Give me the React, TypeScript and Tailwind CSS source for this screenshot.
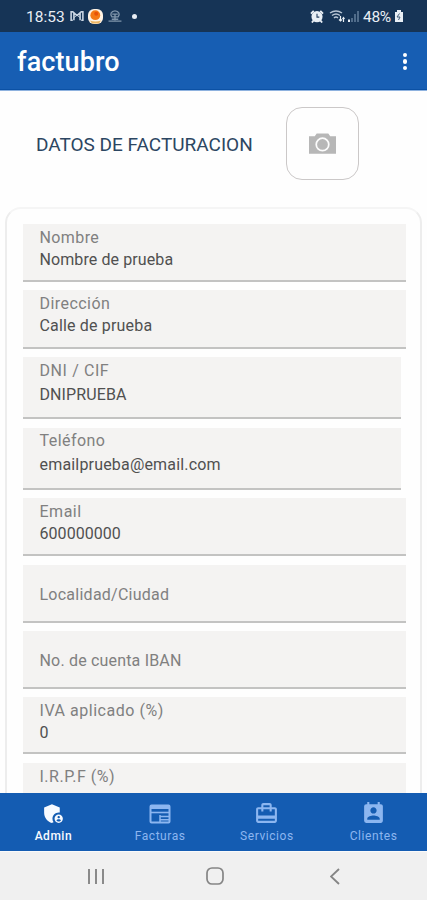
import React from "react";
import { MdAdminPanelSettings, MdCardTravel, MdPermContactCalendar } from "react-icons/md";

type FieldProps = {
  label: string;
  value?: string;
  labelClass: string;
  valueClass?: string;
  box: string;
};

const fields: FieldProps[] = [
  { label: "Nombre", value: "Nombre de prueba", box: "w-[383px] h-[58px] mb-[8px] pt-[4px]", labelClass: "tracking-[0.4px]", valueClass: "mt-[2px] tracking-[0.1px]" },
  { label: "Dirección", value: "Calle de prueba", box: "w-[383px] h-[59px] mb-[8px] pt-[4px]", labelClass: "tracking-[0.45px]", valueClass: "mt-[2px] tracking-[0.17px]" },
  { label: "DNI / CIF", value: "DNIPRUEBA", box: "w-[378px] h-[62px] mb-[9px] pt-[4px]", labelClass: "tracking-[0.6px]", valueClass: "mt-[4px] tracking-[0.1px]" },
  { label: "Teléfono", value: "emailprueba@email.com", box: "w-[378px] h-[62px] mb-[8px] pt-[3px]", labelClass: "tracking-[0.45px]", valueClass: "mt-[4px] tracking-[0.18px]" },
  { label: "Email", value: "600000000", box: "w-[383px] h-[58px] mb-[9px] pt-[4px]", labelClass: "tracking-[0.5px]", valueClass: "mt-[2px] tracking-[0.05px]" },
  { label: "Localidad/Ciudad", box: "w-[383px] h-[58px] mb-[8px] pt-[20px]", labelClass: "tracking-[0.25px]" },
  { label: "No. de cuenta IBAN", box: "w-[383px] h-[58px] mb-[8px] pt-[20px]", labelClass: "tracking-[0.18px]" },
  { label: "IVA aplicado (%)", value: "0", box: "w-[383px] h-[57px] mb-[9px] pt-[4px]", labelClass: "tracking-[0.53px]", valueClass: "mt-[2px]" },
  { label: "I.R.P.F (%)", box: "w-[383px] h-[58px] pt-[4px]", labelClass: "tracking-[0.5px]" },
];

function Field({ label, value, labelClass, valueClass = "", box }: FieldProps) {
  return (
    <div className={`shrink-0 border-b-2 border-[#c3c3c2] bg-[#f4f3f2] pl-[17px] text-[16px] leading-[20px] ${box}`}>
      <div className={`w-max text-[#808080] ${labelClass}`}>{label}</div>
      {value && <div className={`w-max text-[#505050] ${valueClass}`}>{value}</div>}
    </div>
  );
}

function StatusBar() {
  return (
    <div className="flex h-8 shrink-0 items-center justify-between bg-[#163456] pl-[26px] pr-[23px] text-[#e9eef4]">
      <div className="flex items-center">
        <span className="w-[38px] pt-[2px] text-[15.5px] leading-5">18:53</span>
        <svg className="ml-[6px]" width="14" height="12" viewBox="0 0 15 12" fill="none" stroke="#c9d5e2" strokeWidth="1.7">
          <path d="M3 10.500H1.200v-9H3l4.500 4 4.500-4h1.800v9H12M4.200 3v7.500M10.800 3v7.500" />
          <path d="m4 8 3.500-3L11 8" strokeWidth="1" />
        </svg>
        <svg className="ml-[4px]" width="15" height="15" viewBox="0 0 15 15">
          <rect width="15" height="15" rx="6" fill="#fff3e4" />
          <circle cx="7.300" cy="6.200" r="4.900" fill="#f47a16" />
          <circle cx="8.200" cy="4.800" r="2" fill="#e85308" />
          <path d="M2 11.500q5.500 2.200 11 0l-2 3H4Z" fill="#edb563" />
        </svg>
        <svg className="ml-[5px]" width="14" height="12" viewBox="0 0 15 13" fill="none" stroke="#8095ab" strokeWidth="1.500">
          <path d="M4.200 7.500C1.700 5 3.300 1 7.500 1s5.800 4 3.300 6.500Z" />
          <path d="M4.500 4.500h6M7.500 4.500V11M.5 12h14M4 10h7" />
        </svg>
        <span className="ml-[10px] size-[5px] rounded-full bg-[#e7edf4]" />
      </div>
      <div className="flex items-center">
        <svg width="14" height="13" viewBox="0 0 15 14">
          <circle cx="7.500" cy="7.200" r="6" fill="#e9eff5" />
          <path d="m1 4 3-3m7 0 3 3M4 11l-2 2.500M11 11l2 2.500" stroke="#e9eff5" strokeWidth="2" />
          <path d="M7.500 4v3.700h2.500" fill="none" stroke="#243f60" strokeWidth="1.200" />
        </svg>
        <svg className="ml-[5px]" width="17" height="14" viewBox="0 0 17 14" fill="none" stroke="#b8c6d5" strokeWidth="1.500">
          <path d="M1 4q6-4 12 0M3 6.500q4-3 8 0M5 9q2-2 4 0" />
          <path d="M11.500 7v5m-1.500-1.500 1.500 1.500 1.500-1.500M14.500 13V8.500M13.500 10l1-1.500 1 1.500" stroke="#e9eff5" strokeWidth="1.200" />
        </svg>
        <svg className="mx-[1px]" width="13" height="14" viewBox="0 0 13 14">
          <path d="M1 10.500h2V13H1Z" fill="#e9eff5" />
          <path d="M4 9h2v4H4ZM7 5h2v8H7ZM10 2h2v11h-2Z" fill="#506c8a" />
        </svg>
        <span className="ml-[2px] w-[30px] pt-[2px] text-[15.500px] leading-5 tracking-[-0.3px]">48%</span>
        <svg className="ml-[1px]" width="10" height="14" viewBox="0 0 10 14">
          <path d="M3 1h4v2h2v10H1V3h2Z" fill="#e9eff5" />
          <path d="M5.500 4.500 3 8h3l-1.500 3" fill="none" stroke="#435c76" />
        </svg>
      </div>
    </div>
  );
}

function FacturasIcon() {
  return (
    <svg width="22" height="20" viewBox="0 0 22 20" fill="none" stroke="currentColor" strokeWidth="2">
      <rect x="1.500" y="1.500" width="19" height="17" rx="1" />
      <path d="M1 3h20" strokeWidth="4" />
      <path d="M1 8.500h20" strokeWidth="1.600" />
      <path d="M11 12.600h10M11 15.700h10M11 11v8" strokeWidth="1.500" />
    </svg>
  );
}

const tabs = [
  { name: "Admin", icon: <MdAdminPanelSettings size={25} />, color: "text-[#f7faff]", tracking: "tracking-[0.5px] font-medium" },
  { name: "Facturas", icon: <FacturasIcon />, color: "text-[#8cb6f0]", tracking: "tracking-[0.55px]" },
  { name: "Servicios", icon: <MdCardTravel size={25} />, color: "text-[#8cb6f0]", tracking: "tracking-[0.55px]" },
  { name: "Clientes", icon: <MdPermContactCalendar size={25} />, color: "text-[#8cb6f0]", tracking: "tracking-[0.6px]" },
];

export default function App() {
  return (
    <div className="flex h-[900px] w-[427px] flex-col overflow-hidden bg-[#fefefe] font-['Roboto',sans-serif]">
      <StatusBar />
      <header className="flex h-[58px] shrink-0 items-center justify-between border-b border-[#0b51a5] bg-[#175eb3] pl-[17px] pr-[20px] text-white">
        <h1 className="pt-[3px] text-[27px] font-medium leading-8 tracking-[0.1px]">factubro</h1>
        <div className="flex flex-col gap-[2px] pt-[2px]">
          <span className="size-[4.500px] rounded-full bg-white" />
          <span className="size-[4.500px] rounded-full bg-white" />
          <span className="size-[4.500px] rounded-full bg-white" />
        </div>
      </header>
      <main className="flex min-h-0 flex-1 flex-col overflow-hidden border-t border-[#8eb2df]">
        <section className="flex h-[116px] shrink-0 items-start pl-9 pt-[16px]">
          <h2 className="mt-[26px] w-[250px] whitespace-nowrap text-[19px] leading-6 text-[#2c4662]">DATOS DE FACTURACION</h2>
          <div className="flex size-[73px] items-center justify-center rounded-[16px] border border-[#cbc8c8]">
            <svg width="27" height="21" viewBox="0 0 28 21">
              <path d="M0 3h6l2-3h12l2 3h6v18H0Z" fill="#b7b7b7" />
              <circle cx="14" cy="11.500" r="6.500" fill="none" stroke="#fcfcfc" strokeWidth="1.800" />
            </svg>
          </div>
        </section>
        <section className="mx-[5px] flex min-h-0 flex-1 flex-col overflow-hidden rounded-t-[16px] border-x-2 border-t-2 border-x-[#ededed] border-t-[#f5f5f5] bg-[#fefefe] pl-[15.500px] pt-[15px]">
          {fields.map((field) => <Field key={field.label} {...field} />)}
        </section>
      </main>
      <nav className="grid h-[58px] shrink-0 grid-cols-4 bg-[#145cb2]">
        {tabs.map((tab) => (
          <div key={tab.name} className={`flex flex-col items-center pt-2 ${tab.color}`}>
            <div className="flex h-[25px] items-center">{tab.icon}</div>
            <span className={`mt-[2px] text-[12px] leading-4 ${tab.tracking}`}>{tab.name}</span>
          </div>
        ))}
      </nav>
      <footer className="flex h-[49px] shrink-0 items-center border-t border-[#fafafa] bg-[#f0f0f0] pl-[87px] text-[#858585]">
        <svg width="18" height="17" viewBox="0 0 18 17" stroke="currentColor" strokeWidth="1.900">
          <path d="M2 1v15M9 1v15M16 1v15" />
        </svg>
        <svg className="ml-[101px]" width="18" height="18" viewBox="0 0 18 18" fill="none" stroke="currentColor" strokeWidth="1.700">
          <rect x="1" y="1" width="16" height="16" rx="5" />
        </svg>
        <svg className="ml-[106px]" width="10" height="17" viewBox="0 0 10 17" fill="none" stroke="currentColor" strokeWidth="1.900">
          <path d="m9 1-8 7.500L9 16" />
        </svg>
      </footer>
    </div>
  );
}
